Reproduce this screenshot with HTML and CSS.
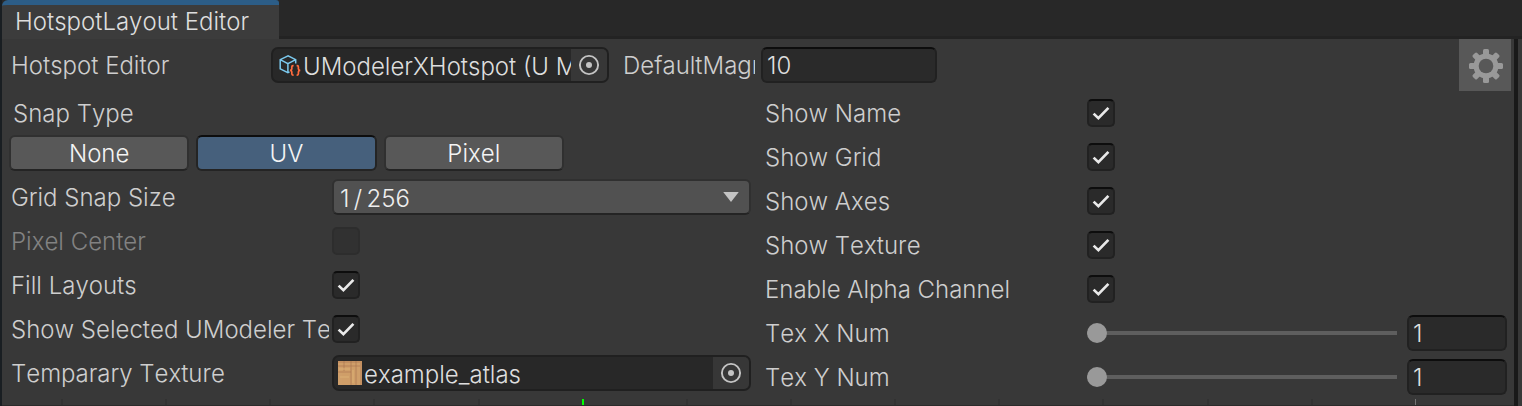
FILE: index.html
```html
<!DOCTYPE html>
<html lang="en">
<head>
<meta charset="utf-8">
<title>HotspotLayout Editor</title>
<link rel="stylesheet" href="styles.css">
</head>
<body>
<svg class="symbols" aria-hidden="true">
  <symbol id="check" viewBox="0 0 28 28"><path d="M6.6 14.6 11.4 19.2 21.4 8.9" fill="none" stroke="#e9e9e9" stroke-width="2.7"/></symbol>
  <symbol id="picker" viewBox="0 0 22 22"><circle cx="11" cy="11" r="9.1" fill="none" stroke="#c4c4c4" stroke-width="1.9"/><circle cx="11" cy="11" r="3" fill="#c4c4c4"/></symbol>
</svg>
<div class="window">
  <header class="tabs"><button class="tab" type="button">HotspotLayout Editor</button></header>
  <main class="body">
    <div class="toolbar">
      <span class="text toolbar-label" id="editor-label">Hotspot Editor</span>
      <div class="object-field toolbar-object" role="group" aria-labelledby="editor-label">
        <svg class="thumb" viewBox="0 0 24 24" aria-hidden="true">
          <path d="M12.5 18.9 10.9 19.7 3.2 15.9V6.6L11.1 2.8 18.7 6.6V10.4M3.2 6.6 10.9 10.7 18.7 6.6M10.9 10.7V19.7" fill="none" stroke="#7bc9ee" stroke-width="1.5"/>
          <path d="M16.6 12.7H16Q14.8 12.7 14.8 13.9V16Q14.8 17.2 13 17.3Q14.8 17.5 14.8 18.7V20.8Q14.8 22.1 16 22.1H16.6M19.6 12.7H20.2Q21.4 12.7 21.4 13.9V16Q21.4 17.2 23.2 17.3Q21.4 17.5 21.4 18.7V20.8Q21.4 22.1 20.2 22.1H19.6" fill="none" stroke="#ff6b3d" stroke-width="1.7"/>
        </svg>
        <span class="object-name">UModelerXHotspot (U Mo</span>
        <button class="pick" type="button" aria-label="Select object"><svg><use href="#picker"/></svg></button>
      </div>
      <label class="text mag-label" for="mag">DefaultMagn</label>
      <input class="field mag" id="mag" type="text" value="10">
      <button class="settings" type="button" aria-label="Settings">
        <svg viewBox="0 0 52 52" aria-hidden="true">
          <g fill="#999">
            <g id="teeth"><rect x="24" y="10" width="6" height="34" rx="1.5"/><rect x="10" y="24" width="34" height="6" rx="1.5"/></g>
            <use href="#teeth" transform="rotate(45 27 27)"/>
            <circle cx="27" cy="27" r="12.5"/>
          </g>
          <circle cx="27" cy="27" r="7.3" fill="#585858"/>
        </svg>
      </button>
    </div>
    <div class="columns">
      <section class="column">
        <div class="snap" role="group" aria-labelledby="snap-label">
          <span class="text snap-label" id="snap-label">Snap Type</span>
          <div class="segments">
            <button class="segment" type="button">None</button>
            <button class="segment active" type="button" aria-pressed="true">UV</button>
            <button class="segment" type="button">Pixel</button>
          </div>
        </div>
        <div class="row">
          <label class="text" for="grid">Grid Snap Size</label>
          <span class="dropdown"><select id="grid"><option>1&#8201;/&#8201;256</option></select><svg viewBox="0 0 14 9" aria-hidden="true"><path d="M0 0H14L7 9Z" fill="#c4c4c4"/></svg></span>
        </div>
        <div class="row disabled">
          <label class="text" for="center">Pixel Center</label>
          <span class="toggle"><input id="center" type="checkbox" disabled></span>
        </div>
        <div class="row">
          <label class="text" for="fill">Fill Layouts</label>
          <span class="toggle"><input id="fill" type="checkbox" checked><svg><use href="#check"/></svg></span>
        </div>
        <div class="row">
          <label class="text" for="selected">Show Selected UModeler Tex</label>
          <span class="toggle"><input id="selected" type="checkbox" checked><svg><use href="#check"/></svg></span>
        </div>
        <div class="row">
          <span class="text" id="texture-label">Temparary Texture</span>
          <div class="object-field" role="group" aria-labelledby="texture-label">
            <svg class="thumb" viewBox="0 0 24 24" aria-hidden="true">
              <rect width="24" height="24" fill="#cf9f6b"/>
              <path d="M0 1H24M0 5H24M0 11H13M23 0V24" stroke="#b98258" stroke-width="2" opacity=".5"/>
              <path d="M13 0V24M18 0V24M6 0V10" stroke="#a87550" stroke-width="1" opacity=".7"/>
              <path d="M1 8H12M2 16H11M15 9V22" stroke="#dcb074" stroke-width="2" opacity=".5"/>
            </svg>
            <span class="object-name">example_atlas</span>
            <button class="pick" type="button" aria-label="Select texture"><svg><use href="#picker"/></svg></button>
          </div>
        </div>
      </section>
      <section class="column display">
        <div class="row">
          <label class="text" for="name">Show Name</label>
          <span class="toggle"><input id="name" type="checkbox" checked><svg><use href="#check"/></svg></span>
        </div>
        <div class="row">
          <label class="text" for="show-grid">Show Grid</label>
          <span class="toggle"><input id="show-grid" type="checkbox" checked><svg><use href="#check"/></svg></span>
        </div>
        <div class="row">
          <label class="text" for="axes">Show Axes</label>
          <span class="toggle"><input id="axes" type="checkbox" checked><svg><use href="#check"/></svg></span>
        </div>
        <div class="row">
          <label class="text" for="texture">Show Texture</label>
          <span class="toggle"><input id="texture" type="checkbox" checked><svg><use href="#check"/></svg></span>
        </div>
        <div class="row">
          <label class="text" for="alpha">Enable Alpha Channel</label>
          <span class="toggle"><input id="alpha" type="checkbox" checked><svg><use href="#check"/></svg></span>
        </div>
        <div class="row">
          <label class="text" for="tex-x">Tex X Num</label>
          <div class="slider"><input id="tex-x" type="range" min="1" max="10" value="1"><input class="field" type="text" value="1" aria-label="Tex X Num value"></div>
        </div>
        <div class="row">
          <label class="text" for="tex-y">Tex Y Num</label>
          <div class="slider"><input id="tex-y" type="range" min="1" max="10" value="1"><input class="field" type="text" value="1" aria-label="Tex Y Num value"></div>
        </div>
      </section>
    </div>
    <div class="ruler" aria-hidden="true"><i></i><i></i><i></i><i></i><i></i><i class="origin"></i><i></i><i></i><i></i><i></i><i></i><i></i><i></i><i class="edge"></i></div>
  </main>
</div>
</body>
</html>
```
FILE: styles.css
```css
* { box-sizing: border-box; }

body {
  margin: 0;
  background: #282828;
  color: #cecece;
  font: 350 24px/36px Inter, "Liberation Sans", sans-serif;
  font-kerning: none;
  overflow: hidden;
}

button, input, select {
  margin: 0;
  color: inherit;
  font: inherit;
  font-kerning: none;
}

.symbols { display: none; }

.window {
  display: flex;
  flex-direction: column;
  min-height: 100vh;
  border-left: 2px solid #191e22;
}

.tabs {
  display: flex;
  background: #282828;
  box-shadow: inset 0 -3px #232323;
}

.tab {
  height: 39px;
  padding: 0 30px 0 13px;
  border: 0;
  border-top: 5px solid #2c5d87;
  border-radius: 6px 3px 0 0;
  background: #3c3c3c;
  color: #dedede;
  line-height: 32px;
}

.body {
  flex: 1;
  display: flex;
  flex-direction: column;
  background: #383838;
  border-right: 4px solid #191919;
  margin-right: 4px;
  box-shadow: 4px 0 #383838;
}

.toolbar {
  display: flex;
  align-items: flex-start;
  padding: 0 3px 0 9px;
}

.toolbar > :not(.settings) { margin-top: 8px; }

.text {
  height: 36px;
  line-height: 38px;
  overflow: hidden;
  white-space: nowrap;
}

.toolbar-label { width: 260px; }
.toolbar-object { width: 338px; }
.mag-label { width: 132px; margin-left: 14px; }
.toolbar .mag { width: 176px; margin-left: 6px; }

.settings {
  display: flex;
  width: 52px;
  height: 52px;
  margin-left: auto;
  padding: 0;
  border: 0;
  background: #585858;
}

.columns {
  display: grid;
  grid-template-columns: minmax(0, 740fr) minmax(0, 742fr);
  gap: 14px;
  padding: 4px 7px 0 9px;
}

.column {
  display: flex;
  flex-direction: column;
  gap: 8px;
}

.row {
  display: grid;
  grid-template-columns: 318px minmax(0, 1fr);
  column-gap: 3px;
  align-items: center;
  height: 36px;
}

.display .row { column-gap: 4px; }

.snap {
  display: flex;
  flex-direction: column;
  gap: 4px;
}

.snap-label { padding-left: 2px; }

.segments {
  display: flex;
  gap: 7px;
  max-width: 555px;
  margin-left: -2px;
}

.segment {
  flex: 1;
  height: 36px;
  padding: 2px 0 0;
  border: 2px solid #303030;
  border-bottom-color: #242424;
  border-radius: 6px;
  background: #585858;
  color: #f4f4f4;
  line-height: 30px;
}

.segment.active {
  border-color: #242424;
  border-top-color: #0d0d0d;
  background: #46607c;
}

.field {
  width: 100%;
  height: 36px;
  padding: 2px 4px 0;
  border: 2px solid #212121;
  border-top-color: #0d0d0d;
  border-radius: 6px;
  background: #2a2a2a;
  color: #dedede;
}

.object-field {
  display: flex;
  align-items: center;
  height: 36px;
  border: 2px solid #202020;
  border-radius: 7px;
  background: #282828;
  color: #dedede;
  overflow: hidden;
}

.thumb {
  flex: none;
  width: 24px;
  height: 24px;
  margin: 0 2px 0 4px;
}

.object-name {
  flex: 1;
  line-height: 32px;
  padding-top: 3px;
  overflow: hidden;
  white-space: nowrap;
}

.pick {
  display: grid;
  place-items: center;
  width: 36px;
  height: 32px;
  padding: 0;
  border: 0;
  background: #373737;
}

.pick svg { width: 22px; height: 22px; }

.dropdown, .toggle { display: grid; }
.dropdown > *, .toggle > * { grid-area: 1 / 1; }
.dropdown svg, .toggle svg { pointer-events: none; }

.dropdown select {
  appearance: none;
  width: 100%;
  height: 36px;
  padding: 0 6px 3px;
  border: 2px solid #303030;
  border-bottom-color: #242424;
  border-radius: 6px;
  background: #515151;
  color: #eee;
}

.dropdown svg {
  width: 16px;
  height: 10px;
  margin-right: 12px;
  place-self: center end;
}

.toggle { justify-content: start; }
.toggle svg { width: 28px; height: 28px; }

.toggle input {
  appearance: none;
  width: 28px;
  height: 28px;
  border: 2px solid #212121;
  border-top-color: #0d0d0d;
  border-radius: 5px;
  background: #2a2a2a;
}

.disabled .text { color: #828282; }

.toggle input:disabled {
  border-color: #2d2d2d;
  background: #313131;
}

.slider {
  display: grid;
  grid-template-columns: minmax(0, 1fr) 100px;
  gap: 10px;
  align-items: center;
}

.slider input[type="range"] {
  appearance: none;
  width: 100%;
  height: 20px;
  background: linear-gradient(#5e5e5e, #5e5e5e) center / 100% 4px no-repeat;
}

.slider input::-webkit-slider-thumb {
  appearance: none;
  width: 20px;
  height: 20px;
  border-radius: 50%;
  background: #999;
}

.ruler {
  flex: 1;
  display: flex;
  justify-content: space-between;
  margin-top: 4px;
  padding: 0 98px 0 59px;
  border-bottom: 1px solid #2b2b2b;
}

.ruler i { width: 2px; background: #323232; }
.ruler .origin { background: #0f0; }
.ruler .edge { width: 1px; background: #747474; }
```
